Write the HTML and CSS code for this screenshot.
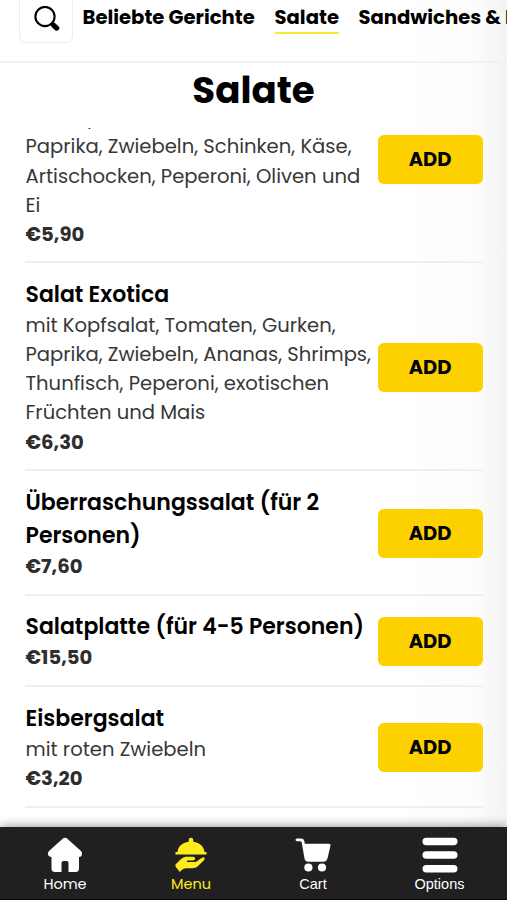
FILE: index.html
```html
<!DOCTYPE html>
<html lang="de">
<head>
<meta charset="utf-8">
<title>Salate</title>
<link rel="stylesheet" href="styles.css">
</head>
<body>
<div class="app">
  <header class="topbar">
    <button class="search" aria-label="Suche">
      <svg width="26" height="26" viewBox="0 0 26 26"><circle cx="11" cy="10.500" r="9.600" fill="none" stroke="#000" stroke-width="2.100"/><path d="M17.400 17.200l1.500 1.500" stroke="#000" stroke-width="3"/><path d="M19.700 19.300l3 2.800" stroke="#000" stroke-width="5.200" stroke-linecap="round"/></svg>
    </button>
    <nav class="tabs">
      <a class="tab tab-popular">Beliebte Gerichte</a>
      <a class="tab tab-active">Salate</a>
      <a class="tab tab-last">Sandwiches &amp; Burger</a>
    </nav>
  </header>
  <h1>Salate</h1>
  <main class="list">
    <article class="item item-clipped">
      <div class="info">
        <p>mit Kopfsalat, Tomaten, Gurken,<br>Paprika, Zwiebeln, Schinken, Käse,<br>Artischocken, Peperoni, Oliven und<br>Ei</p>
        <strong>€5,90</strong>
      </div>
      <button class="add">ADD</button>
    </article>
    <article class="item">
      <div class="info">
        <h2>Salat Exotica</h2>
        <p>mit Kopfsalat, Tomaten, Gurken,<br>Paprika, Zwiebeln, Ananas, Shrimps,<br>Thunfisch, Peperoni, exotischen<br>Früchten und Mais</p>
        <strong>€6,30</strong>
      </div>
      <button class="add">ADD</button>
    </article>
    <article class="item">
      <div class="info">
        <h2>Überraschungssalat (für 2<br>Personen)</h2>
        <strong>€7,60</strong>
      </div>
      <button class="add">ADD</button>
    </article>
    <article class="item">
      <div class="info">
        <h2>Salatplatte (für 4-5 Personen)</h2>
        <strong>€15,50</strong>
      </div>
      <button class="add">ADD</button>
    </article>
    <article class="item">
      <div class="info">
        <h2>Eisbergsalat</h2>
        <p>mit roten Zwiebeln</p>
        <strong>€3,20</strong>
      </div>
      <button class="add">ADD</button>
    </article>
  </main>
  <footer class="bottom">
    <a class="link">
      <svg width="36" height="36" viewBox="0 0 36 36" fill="#fff"><path d="M16.200 1.300Q18 0 19.800 1.300L34 14Q36 16 34.600 18.500Q33.800 20 32 20V31.500Q32 35 28.500 35H21.500V26Q21.500 24 19.500 24H16.500Q14.500 24 14.500 26V35H8Q4.500 35 4.500 31.500V20Q2.300 20 1.200 18.300Q0 15.800 2 14Z"/></svg>
      <span class="geo">Home</span>
    </a>
    <a class="link active">
      <svg width="36" height="36" viewBox="0 0 36 36" fill="#ffeb1c"><path d="M4.500 15C5 9.500 9 5.600 15.800 4.700Q15 1 18 .7Q21 1 20.200 4.700C27 5.600 31 9.500 31.500 15H33.500V17.500H2.500V15Z"/><path d="M6.500 23.500Q9 20.300 12.500 19.800H20Q22.500 20.200 22 22.300Q21.500 23.500 19 23.600H14V25H22Q23.800 24.700 25 23.600L29 20.800Q30.800 19.600 31.600 21Q32 22 31 23.200L24.500 29.600Q22.500 31.200 19.500 31.200H12.500Q9.600 31.400 6.800 35L2.500 29.400V27.600Z"/></svg>
      <span class="geo">Menu</span>
    </a>
    <a class="link">
      <svg width="36" height="36" viewBox="0 0 36 36" fill="#fff"><path d="M2 1.400H6.500Q8.900 1.500 9.300 4L9.800 6.800H34.300Q35.800 7 35.500 8.500L32.600 21Q31.800 24.500 28.500 24.800H12.700Q10.200 24.500 9.600 22L6.700 5.500Q6.400 4.200 5 4.200H2Q.5 4 .5 2.800Q.5 1.500 2 1.400Z"/><circle cx="13.400" cy="30.500" r="4.100"/><circle cx="27" cy="30.500" r="4.100"/></svg>
      <span>Cart</span>
    </a>
    <a class="link">
      <svg width="36" height="36" viewBox="0 0 36 36" fill="#fff"><rect x=".5" y=".7" width="35" height="7.500" rx="3.700"/><rect x=".5" y="14.300" width="35" height="7.500" rx="3.700"/><rect x=".5" y="27.900" width="35" height="7.500" rx="3.700"/></svg>
      <span>Options</span>
    </a>
  </footer>
</div>
</body>
</html>
```
FILE: styles.css
```css
* { box-sizing: border-box; }
body { margin: 0; font-family: Poppins, Inter, sans-serif; color: #000; }
h1, h2, p { margin: 0; }
button { font: inherit; padding: 0; color: #000; }

.app {
  width: 507px;
  height: 900px;
  overflow: hidden;
  display: flex;
  flex-direction: column;
  background: linear-gradient(90deg, #fff 400px, #fcfcfc 475px, #f3f3f3 507px);
}

.topbar {
  flex: none;
  height: 63px;
  padding-left: 19px;
  border-bottom: 2px solid #f1f1f1;
  display: flex;
  overflow: hidden;
}
.search {
  flex: none;
  width: 54px;
  height: 55px;
  margin-top: -12px;
  border: 1.5px solid #ececec;
  border-radius: 7px;
  background: #fff;
  display: grid;
  place-items: center;
  padding: 6px 0 0 2px;
}
.tabs { display: flex; gap: 20px; margin-left: 9.500px; white-space: nowrap; }
.tab { height: 34px; line-height: 35px; font-size: 19.600px; font-weight: 700; border-bottom: 2px solid transparent; }
.tab-popular { width: 172px; }
.tab-active { width: 64px; border-color: #fce92b; }

h1 { flex: none; height: 65px; line-height: 55px; text-align: center; font-size: 37.200px; font-weight: 700; }

.list { flex: 1; min-height: 0; overflow: hidden; padding: 0 24.500px 0 25px; }
.item {
  display: flex;
  align-items: center;
  justify-content: space-between;
  padding: 14.600px 0 12.400px;
  border-bottom: 2px solid #efefef;
}
.item-clipped { height: 208px; margin-top: -73px; padding-bottom: 11.600px; align-items: flex-end; }
.item-clipped .add { margin-bottom: 65.500px; }
.info { white-space: nowrap; width: 351px; padding-left: .5px; flex: none; }
h2 { font-size: 22px; line-height: 33.100px; font-weight: 600; }
p { font-size: 19.580px; line-height: 29.250px; color: #383838; }
strong { display: block; font-size: 19.600px; line-height: 29.250px; font-weight: 700; color: #2e2e2e; }
.add {
  flex: none;
  width: 105px;
  height: 49px;
  border: 0;
  border-radius: 6px;
  background: #fdd000;
  font-size: 19.500px;
  font-weight: 700;
}

.bottom {
  flex: none;
  position: relative;
  height: 73px;
  padding: 10px 2px 0 2px;
  background: #202020;
  border-bottom: 1px solid #080808;
  box-shadow: 0 -1px 10px rgba(0, 0, 0, .4);
  display: grid;
  grid-template-columns: 126px 126px 118px 135px;
}
.link {
  display: flex;
  flex-direction: column;
  align-items: center;
  color: #fff;
  font-family: "Liberation Sans", sans-serif;
  font-size: 14.500px;
  line-height: 22px;
}
.link svg { display: block; flex: none; }
.geo { font-family: Poppins, Inter, sans-serif; font-size: 14.500px; }
.active { color: #ffeb1c; }
```
